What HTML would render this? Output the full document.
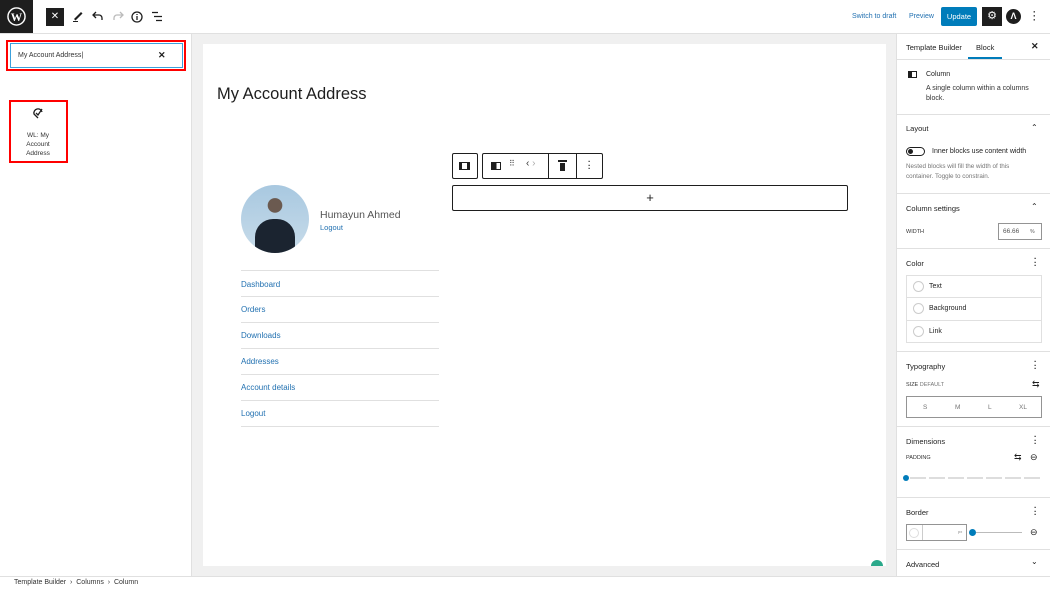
<!DOCTYPE html>
<html><head><meta charset="utf-8"><style>
*{box-sizing:border-box;margin:0;padding:0}
body{width:1050px;height:590px;position:relative;overflow:hidden;font-family:"Liberation Sans",sans-serif;background:#fff;color:#1e1e1e}
.a{position:absolute}
.t{font-size:7px;color:#1e1e1e}
.link{color:#2271b1}
.hr{position:absolute;height:1px;background:#e0e0e0}
.sec{font-size:7.5px;color:#1e1e1e}
.dots{font-size:10px;font-weight:bold;line-height:1}
</style></head><body>
<div class="a" style="left:0;top:0;width:1050px;height:34px;background:#fff;border-bottom:1px solid #e0e0e0"></div>
<div class="a" style="left:0;top:0;width:33px;height:33px;background:#1e1e1e"></div>
<svg class="a" style="left:7px;top:7px" width="19" height="19" viewBox="0 0 20 20"><circle cx="10" cy="10" r="9" fill="none" stroke="#fff" stroke-width="1.5"/><text x="10" y="14.5" font-size="12" font-family="Liberation Serif" font-weight="bold" fill="#fff" text-anchor="middle">W</text></svg>
<div class="a" style="left:46px;top:8px;width:18px;height:18px;background:#1e1e1e;color:#fff;font-size:10px;text-align:center;line-height:18px">✕</div>
<svg class="a" style="left:72px;top:10px" width="12" height="12" viewBox="0 0 12 12"><path d="M2 9 L9 2 L10.5 3.5 L3.5 10.5Z" fill="#1e1e1e"/><path d="M1 11.5h5" stroke="#1e1e1e"/></svg>
<svg class="a" style="left:92px;top:11px" width="12" height="10" viewBox="0 0 12 10"><path d="M4 1L1 4L4 7M1 4h6a3 3 0 0 1 3 3v2" fill="none" stroke="#1e1e1e" stroke-width="1.3"/></svg>
<svg class="a" style="left:112px;top:11px" width="12" height="10" viewBox="0 0 12 10"><path d="M8 1L11 4L8 7M11 4h-6a3 3 0 0 0-3 3v2" fill="none" stroke="#bbb" stroke-width="1.3"/></svg>
<svg class="a" style="left:131px;top:11px" width="12" height="12" viewBox="0 0 12 12"><circle cx="6" cy="6" r="5" fill="none" stroke="#1e1e1e" stroke-width="1.3"/><path d="M6 5v4M6 3v1" stroke="#1e1e1e" stroke-width="1.3"/></svg>
<svg class="a" style="left:151px;top:11px" width="12" height="11" viewBox="0 0 12 11"><path d="M1 1.5h6M3 5.5h8M5 9.5h6" stroke="#1e1e1e" stroke-width="1.3"/></svg>
<div class="a link" style="left:852px;top:13px;font-size:7px">Switch to draft</div>
<div class="a link" style="left:909px;top:13px;font-size:7px">Preview</div>
<div class="a" style="left:941px;top:7px;width:36px;height:19px;background:#007cba;color:#fff;font-size:7.5px;text-align:center;line-height:19px;border-radius:2px">Update</div>
<div class="a" style="left:982px;top:7px;width:20px;height:19px;background:#1e1e1e;color:#fff;font-size:11px;text-align:center;line-height:19px">⚙</div>
<div class="a" style="left:1006px;top:9px;width:15px;height:15px;border-radius:50%;background:#1e1e1e;color:#fff;font-size:9px;text-align:center;line-height:15px;font-weight:bold">Λ</div>
<div class="a dots" style="left:1033px;top:10px;width:3px;font-size:9px;line-height:4px">·<br>·<br>·</div>

<div class="a" style="left:191px;top:34px;width:1px;height:542px;background:#e0e0e0"></div>
<div class="a" style="left:6px;top:40px;width:180px;height:31px;border:2px solid #f00"></div>
<div class="a" style="left:10px;top:43px;width:173px;height:25px;border:1.5px solid #3aa0dc;background:#fff"></div>
<div class="a" style="left:18px;top:52px;font-size:7px;color:#333">My Account Address|</div>
<div class="a" style="left:158px;top:50px;font-size:9px;font-weight:bold">✕</div>
<div class="a" style="left:9px;top:100px;width:59px;height:63px;border:2px solid #f00"></div>
<svg class="a" style="left:32px;top:107px" width="12" height="12" viewBox="0 0 12 12"><path d="M6 11L2 7A4 4 0 1 1 10 5" fill="none" stroke="#1e1e1e" stroke-width="1.3"/><path d="M4 6l2 2 4-6" fill="none" stroke="#1e1e1e" stroke-width="1.3"/></svg>
<div class="a" style="left:20px;top:131px;width:36px;text-align:center;font-size:6.5px;line-height:9px;color:#333">WL: My Account Address</div>

<div class="a" style="left:192px;top:34px;width:704px;height:542px;background:#f0f0f0"></div>
<div class="a" style="left:203px;top:44px;width:683px;height:522px;background:#fff"></div>
<div class="a" style="left:217px;top:85px;font-size:16.5px;color:#1e1e1e">My Account Address</div>
<div class="a" style="left:241px;top:185px;width:68px;height:68px;border-radius:50%;background:radial-gradient(circle at 50% 30%,#6b5a50 0 12%,transparent 13%),linear-gradient(#a8c8e0,#c8dcea);overflow:hidden"><div style="position:absolute;left:14px;top:34px;width:40px;height:40px;border-radius:45% 45% 0 0;background:#1b2430"></div></div>
<div class="a" style="left:320px;top:209px;font-size:10.5px;color:#555">Humayun Ahmed</div>
<div class="a link" style="left:320px;top:223px;font-size:7.5px">Logout</div>
<div class="hr" style="left:241px;top:270px;width:198px"></div>
<div class="a link" style="left:241px;top:280px;font-size:8px">Dashboard</div>
<div class="hr" style="left:241px;top:296px;width:198px"></div>
<div class="a link" style="left:241px;top:305px;font-size:8px">Orders</div>
<div class="hr" style="left:241px;top:322px;width:198px"></div>
<div class="a link" style="left:241px;top:331px;font-size:8px">Downloads</div>
<div class="hr" style="left:241px;top:348px;width:198px"></div>
<div class="a link" style="left:241px;top:357px;font-size:8px">Addresses</div>
<div class="hr" style="left:241px;top:374px;width:198px"></div>
<div class="a link" style="left:241px;top:383px;font-size:8px">Account details</div>
<div class="hr" style="left:241px;top:400px;width:198px"></div>
<div class="a link" style="left:241px;top:409px;font-size:8px">Logout</div>
<div class="hr" style="left:241px;top:426px;width:198px"></div>
<div class="a" style="left:452px;top:153px;width:26px;height:26px;border:1px solid #1e1e1e;border-radius:2px"></div>
<div class="a" style="left:459px;top:162px;width:11px;height:8px;border:1.3px solid #1e1e1e;border-left-width:3px;border-right-width:3px"></div>
<div class="a" style="left:482px;top:153px;width:121px;height:26px;border:1px solid #1e1e1e;border-radius:2px"></div>
<div class="a" style="left:548px;top:153px;width:1px;height:26px;background:#1e1e1e"></div>
<div class="a" style="left:576px;top:153px;width:1px;height:26px;background:#1e1e1e"></div>
<div class="a" style="left:491px;top:162px;width:10px;height:8px;border:1.3px solid #1e1e1e;background:linear-gradient(90deg,#1e1e1e 55%,#fff 55%)"></div>
<div class="a" style="left:509px;top:159px;font-size:8px;color:#555;letter-spacing:-1px">⠿</div>
<div class="a" style="left:526px;top:158px;font-size:10px;color:#333">‹ <span style="color:#aaa">›</span></div>
<div class="a" style="left:558px;top:160px;width:9px;height:1.5px;background:#1e1e1e"></div>
<div class="a" style="left:560px;top:163px;width:5px;height:8px;background:#1e1e1e"></div>
<div class="a dots" style="left:588px;top:160px;font-size:8px;line-height:3.5px">·<br>·<br>·</div>
<div class="a" style="left:452px;top:185px;width:396px;height:26px;border:1px solid #1e1e1e;border-radius:2px;text-align:center;font-size:13px;line-height:24px">+</div>
<div class="a" style="left:871px;top:560px;width:12px;height:6px;border-radius:6px 6px 0 0;background:#2aa88a"></div>

<div class="a" style="left:896px;top:34px;width:1px;height:542px;background:#e0e0e0"></div>
<div class="a t" style="left:906px;top:43px;font-size:7.5px">Template Builder</div>
<div class="a t" style="left:976px;top:43px;font-size:7.5px">Block</div>
<div class="a" style="left:968px;top:57px;width:34px;height:2px;background:#007cba"></div>
<div class="a" style="left:1031px;top:41px;font-size:9px;font-weight:bold">✕</div>
<div class="hr" style="left:897px;top:59px;width:153px"></div>
<div class="a" style="left:908px;top:71px;width:9px;height:7px;border:1.3px solid #1e1e1e;background:linear-gradient(90deg,#1e1e1e 40%,#fff 40%)"></div>
<div class="a t" style="left:926px;top:71px">Column</div>
<div class="a" style="left:926px;top:84px;font-size:7px;line-height:10px;color:#333;width:110px">A single column within a columns block.</div>
<div class="hr" style="left:897px;top:114px;width:153px"></div>
<div class="a sec" style="left:906px;top:124px">Layout</div>
<div class="a" style="left:1031px;top:123px;font-size:8px">⌃</div>
<div class="a" style="left:906px;top:147px;width:19px;height:9px;border:1px solid #1e1e1e;border-radius:5px"></div>
<div class="a" style="left:908px;top:149px;width:5px;height:5px;border-radius:50%;background:#1e1e1e"></div>
<div class="a t" style="left:932px;top:148px">Inner blocks use content width</div>
<div class="a" style="left:906px;top:162px;font-size:6.3px;line-height:10px;color:#757575;width:118px">Nested blocks will fill the width of this container. Toggle to constrain.</div>
<div class="hr" style="left:897px;top:193px;width:153px"></div>
<div class="a sec" style="left:906px;top:204px">Column settings</div>
<div class="a" style="left:1031px;top:202px;font-size:8px">⌃</div>
<div class="a" style="left:906px;top:229px;font-size:5.5px;color:#333">WIDTH</div>
<div class="a" style="left:998px;top:223px;width:44px;height:17px;border:1px solid #949494;font-size:6.5px;color:#555;padding:4px 0 0 4px">66.66 <span style="font-size:5px;margin-left:9px">%</span></div>
<div class="hr" style="left:897px;top:248px;width:153px"></div>
<div class="a sec" style="left:906px;top:259px">Color</div>
<div class="a dots" style="left:1034px;top:257px;font-size:8px;line-height:3.5px">·<br>·<br>·</div>
<div class="a" style="left:906px;top:275px;width:136px;height:68px;border:1px solid #e0e0e0"></div>
<div class="hr" style="left:907px;top:297px;width:134px"></div>
<div class="hr" style="left:907px;top:320px;width:134px"></div>
<div class="a" style="left:913px;top:281px;width:11px;height:11px;border:1px solid #ccc;border-radius:50%"></div>
<div class="a t" style="left:929px;top:283px">Text</div>
<div class="a" style="left:913px;top:303px;width:11px;height:11px;border:1px solid #ccc;border-radius:50%"></div>
<div class="a t" style="left:929px;top:305px">Background</div>
<div class="a" style="left:913px;top:326px;width:11px;height:11px;border:1px solid #ccc;border-radius:50%"></div>
<div class="a t" style="left:929px;top:328px">Link</div>
<div class="hr" style="left:897px;top:351px;width:153px"></div>
<div class="a sec" style="left:906px;top:362px">Typography</div>
<div class="a dots" style="left:1034px;top:360px;font-size:8px;line-height:3.5px">·<br>·<br>·</div>
<div class="a" style="left:906px;top:382px;font-size:5.5px;color:#333">SIZE <span style="color:#757575">DEFAULT</span></div>
<div class="a" style="left:1032px;top:379px;font-size:9px">⇆</div>
<div class="a" style="left:906px;top:396px;width:136px;height:22px;border:1px solid #949494;font-size:6.5px;color:#757575"><span class="a" style="left:16px;top:7px">S</span><span class="a" style="left:48px;top:7px">M</span><span class="a" style="left:81px;top:7px">L</span><span class="a" style="left:112px;top:7px">XL</span></div>
<div class="hr" style="left:897px;top:426px;width:153px"></div>
<div class="a sec" style="left:906px;top:437px">Dimensions</div>
<div class="a dots" style="left:1034px;top:435px;font-size:8px;line-height:3.5px">·<br>·<br>·</div>
<div class="a" style="left:906px;top:455px;font-size:5.5px;color:#333">PADDING</div>
<div class="a" style="left:1014px;top:452px;font-size:9px">⇆</div>
<div class="a" style="left:1030px;top:452px;font-size:9px">⊖</div>
<div class="a" style="left:903px;top:475px;width:6px;height:6px;border-radius:50%;background:#007cba"></div>
<div class="a" style="left:910px;top:477px;width:132px;height:2px;background:repeating-linear-gradient(90deg,#ddd 0 16px,#fff 16px 19px)"></div>
<div class="hr" style="left:897px;top:497px;width:153px"></div>
<div class="a sec" style="left:906px;top:508px">Border</div>
<div class="a dots" style="left:1034px;top:506px;font-size:8px;line-height:3.5px">·<br>·<br>·</div>
<div class="a" style="left:906px;top:524px;width:61px;height:17px;border:1px solid #949494"></div>
<div class="a" style="left:922px;top:525px;width:1px;height:15px;background:#ccc"></div>
<div class="a" style="left:909px;top:528px;width:10px;height:10px;border:1px solid #ddd;border-radius:50%"></div>
<div class="a" style="left:958px;top:529px;font-size:4px;color:#888">px</div>
<div class="a" style="left:969px;top:529px;width:7px;height:7px;border-radius:50%;background:#007cba"></div>
<div class="a" style="left:976px;top:532px;width:46px;height:1px;background:#bbb"></div>
<div class="a" style="left:1030px;top:527px;font-size:9px">⊖</div>
<div class="hr" style="left:897px;top:549px;width:153px"></div>
<div class="a sec" style="left:906px;top:560px">Advanced</div>
<div class="a" style="left:1031px;top:557px;font-size:8px">⌄</div>

<div class="a" style="left:0;top:576px;width:1050px;height:14px;background:#fff;border-top:1px solid #e0e0e0"></div>
<div class="a" style="left:14px;top:579px;font-size:7px;color:#333">Template Builder &nbsp;›&nbsp; Columns &nbsp;›&nbsp; Column</div>
</body></html>
